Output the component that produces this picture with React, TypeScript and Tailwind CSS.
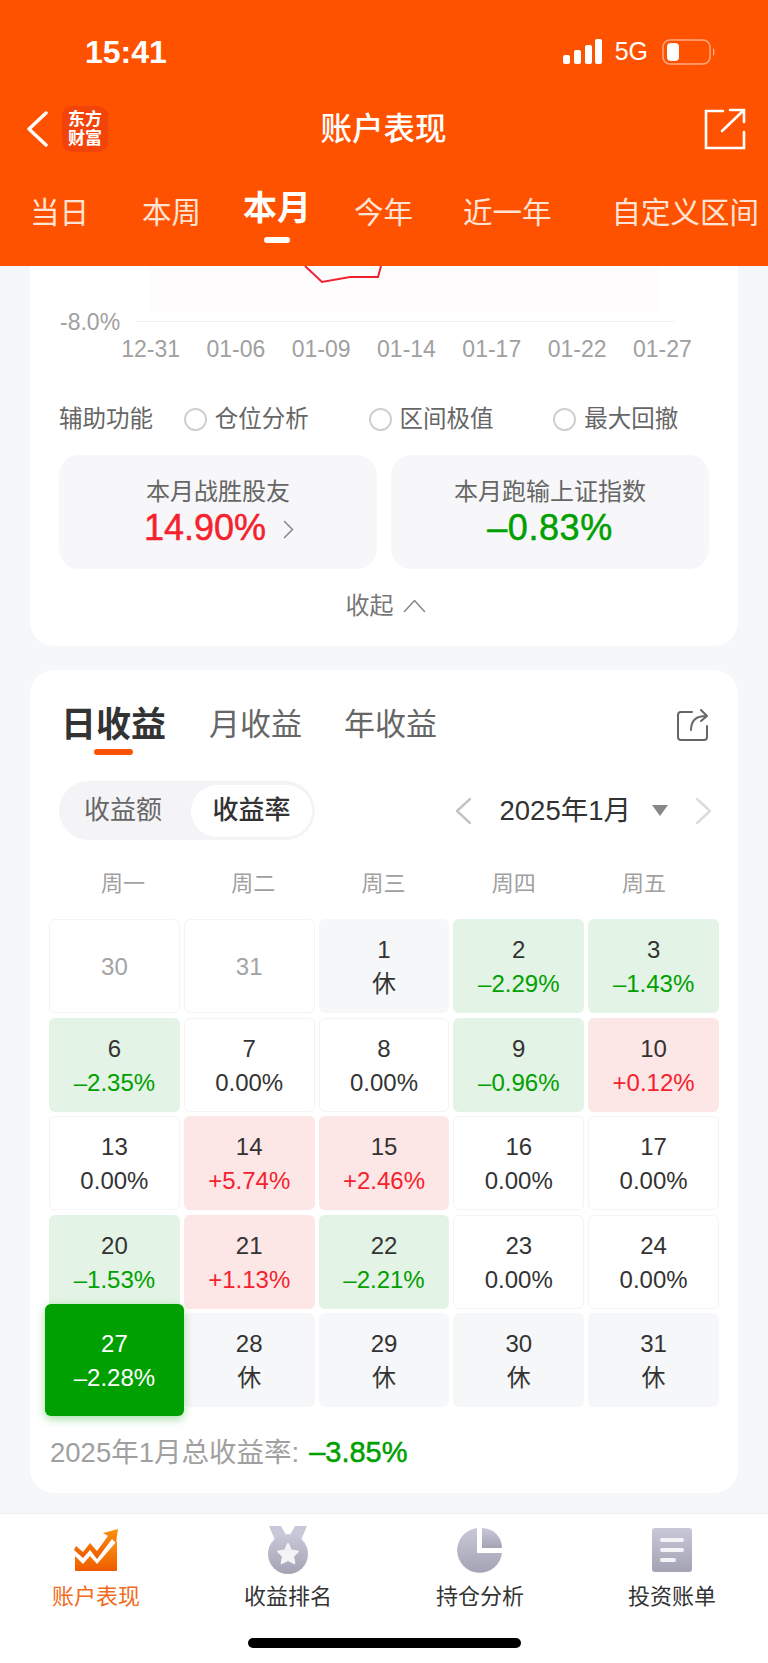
const FONT = "font-['Liberation_Sans','Noto_Sans_CJK_SC',sans-serif]";
const HEAVY = "[-webkit-text-stroke:0.5px_currentColor]";

type Cell = { day: string; value?: string; kind: "off" | "rest" | "flat" | "down" | "up" | "active" };

const cells: Cell[] = [
  { day: "30", kind: "off" },
  { day: "31", kind: "off" },
  { day: "1", value: "休", kind: "rest" },
  { day: "2", value: "–2.29%", kind: "down" },
  { day: "3", value: "–1.43%", kind: "down" },
  { day: "6", value: "–2.35%", kind: "down" },
  { day: "7", value: "0.00%", kind: "flat" },
  { day: "8", value: "0.00%", kind: "flat" },
  { day: "9", value: "–0.96%", kind: "down" },
  { day: "10", value: "+0.12%", kind: "up" },
  { day: "13", value: "0.00%", kind: "flat" },
  { day: "14", value: "+5.74%", kind: "up" },
  { day: "15", value: "+2.46%", kind: "up" },
  { day: "16", value: "0.00%", kind: "flat" },
  { day: "17", value: "0.00%", kind: "flat" },
  { day: "20", value: "–1.53%", kind: "down" },
  { day: "21", value: "+1.13%", kind: "up" },
  { day: "22", value: "–2.21%", kind: "down" },
  { day: "23", value: "0.00%", kind: "flat" },
  { day: "24", value: "0.00%", kind: "flat" },
  { day: "27", value: "–2.28%", kind: "active" },
  { day: "28", value: "休", kind: "rest" },
  { day: "29", value: "休", kind: "rest" },
  { day: "30", value: "休", kind: "rest" },
  { day: "31", value: "休", kind: "rest" },
];

const cellBox = {
  off: "border border-[#f4f4f6] bg-white",
  rest: "bg-[#f6f7f9]",
  flat: "border border-[#f4f4f6] bg-white",
  down: "bg-[#e3f3e5]",
  up: "bg-[#fde6e6]",
  active: "relative z-10 -mx-1 -mt-[9px] -mb-[9px] bg-[#00a000] shadow-[0_3px_10px_rgba(0,160,0,0.35)]",
};

const cellValue = {
  off: "",
  rest: "text-[#333333]",
  flat: "text-[#333333]",
  down: "text-[#00a000]",
  up: "text-[#f5222d]",
  active: "text-white",
};

function DayCell({ cell }: { cell: Cell }) {
  if (cell.kind === "off") {
    return (
      <div className={`flex items-center justify-center rounded-md pt-[2px] text-[24px] text-[#a3a3a3] ${cellBox.off}`}>
        {cell.day}
      </div>
    );
  }
  return (
    <div className={`flex flex-col items-center justify-center gap-[8px] rounded-md pt-[2px] ${cellBox[cell.kind]}`}>
      <span className={`text-[24px] leading-[26px] ${cell.kind === "active" ? "text-white" : "text-[#333333]"}`}>
        {cell.day}
      </span>
      <span className={`text-[24px] leading-[26px] ${cellValue[cell.kind]}`}>{cell.value}</span>
    </div>
  );
}

function Radio({ label }: { label: string }) {
  return (
    <div className="flex w-[185px] items-center gap-[8px]">
      <span className="size-[23px] rounded-full border-2 border-[#d0d0d0]" />
      <span>{label}</span>
    </div>
  );
}

function MonthArrow({ dir, color }: { dir: "left" | "right"; color: string }) {
  return (
    <svg width="17" height="28" viewBox="0 0 17 28" fill="none" stroke={color} strokeWidth="2.4" strokeLinecap="round" strokeLinejoin="round">
      <path d={dir === "left" ? "M15 2 L2 14 L15 26" : "M2 2 L15 14 L2 26"} />
    </svg>
  );
}

function ChartIcon() {
  return (
    <svg width="46" height="46" viewBox="0 0 46 46">
      <defs>
        <linearGradient id="chartFill" x1="0" y1="0" x2="0" y2="1">
          <stop offset="0" stopColor="#f99210" />
          <stop offset="1" stopColor="#ef5a00" />
        </linearGradient>
      </defs>
      <path d="M2 29 L10 37 L17 29 L24 37 L44 14 V43 Q44 44 43 44 H3 Q2 44 2 43 Z" fill="url(#chartFill)" />
      <path d="M3 19 L10 25 L17 16 L24 24 L35 9 L30 6 L45 2 L43 16 L39 12 L24 32 L17 23 L10 31 L1 23 Z" fill="url(#chartFill)" />
    </svg>
  );
}

function MedalIcon() {
  return (
    <svg width="40" height="50" viewBox="0 0 40 50">
      <defs>
        <linearGradient id="medalFill" x1="0" y1="0" x2="0" y2="1">
          <stop offset="0" stopColor="#c9c8d8" />
          <stop offset="1" stopColor="#a4a3b3" />
        </linearGradient>
      </defs>
      <path d="M1 1 H13 L18 10 C14 11 10 13 7 15 Z M27 1 H39 L33 15 C30 13 26 11 22 10 Z" fill="#c9c8d8" />
      <circle cx="20" cy="29" r="20" fill="url(#medalFill)" />
      <path d="M20 19 L23 25.5 L30 26.4 L25 31.2 L26.3 38.2 L20 34.8 L13.7 38.2 L15 31.2 L10 26.4 L17 25.5 Z" fill="#f4f4f7" stroke="#f4f4f7" strokeWidth="2" strokeLinejoin="round" />
    </svg>
  );
}

function PieIcon() {
  return (
    <svg width="46" height="46" viewBox="0 0 46 46">
      <defs>
        <linearGradient id="pieFill" x1="0" y1="0" x2="0" y2="1">
          <stop offset="0" stopColor="#c9c8d8" />
          <stop offset="1" stopColor="#a4a3b3" />
        </linearGradient>
      </defs>
      <path d="M20 1 V26 H45 A22.5 22.5 0 1 1 20 1 Z" fill="url(#pieFill)" />
      <path d="M25 1 A20 20 0 0 1 45 21 H25 Z" fill="url(#pieFill)" />
    </svg>
  );
}

function BillIcon() {
  return (
    <svg width="42" height="46" viewBox="0 0 42 46">
      <defs>
        <linearGradient id="billFill" x1="0" y1="0" x2="0" y2="1">
          <stop offset="0" stopColor="#c9c8d8" />
          <stop offset="1" stopColor="#a4a3b3" />
        </linearGradient>
      </defs>
      <rect x="1" y="1" width="40" height="44" rx="3" fill="url(#billFill)" />
      <rect x="9" y="11" width="24" height="4" rx="2" fill="#f4f4f7" />
      <rect x="9" y="21" width="24" height="4" rx="2" fill="#f4f4f7" />
      <rect x="9" y="31" width="16" height="4" rx="2" fill="#f4f4f7" />
    </svg>
  );
}

export default function App() {
  return (
    <div className={`flex h-[1663px] w-[768px] flex-col overflow-hidden bg-[#f6f7f9] ${FONT}`}>
      <header className="flex h-[266px] shrink-0 flex-col bg-[#ff5200] text-white">
        <div className="flex h-[102px] items-center justify-between pl-[85px] pr-[52px] pt-[2px]">
          <span className="text-[32px] font-semibold">15:41</span>
          <div className="flex items-center">
            <svg width="40" height="26" viewBox="0 0 40 26" fill="white">
              <rect x="0" y="16" width="7" height="9" rx="2" />
              <rect x="11" y="11" width="7" height="14" rx="2" />
              <rect x="22" y="6" width="7" height="19" rx="2" />
              <rect x="32" y="0" width="7" height="25" rx="2" />
            </svg>
            <span className="ml-[12px] text-[25px]">5G</span>
            <svg className="ml-[14px]" width="54" height="26" viewBox="0 0 54 26" fill="none">
              <rect x="1" y="1" width="47" height="24" rx="7" stroke="white" strokeOpacity="0.5" strokeWidth="1.5" />
              <rect x="5" y="4" width="12" height="18" rx="4" fill="white" />
              <path d="M51 9 C53 10 53 16 51 17 Z" fill="white" fillOpacity="0.5" />
            </svg>
          </div>
        </div>
        <div className="grid h-[54px] grid-cols-3 items-center pl-[25px] pr-[22px]">
          <div className="flex items-center gap-[13px]">
            <svg width="24" height="36" viewBox="0 0 24 36" fill="none">
              <path d="M21 2 L4 18 L21 34" stroke="white" strokeWidth="3.4" strokeLinecap="round" strokeLinejoin="round" />
            </svg>
            <div className="flex size-[46px] flex-col items-center justify-center rounded-[10px] bg-[#f2440a] text-[17px] font-bold leading-[19px]">
              <span>东方</span>
              <span>财富</span>
            </div>
          </div>
          <span className="whitespace-nowrap pr-[4px] pt-[2px] text-center text-[31.5px] font-medium">账户表现</span>
          <svg className="justify-self-end" width="42" height="42" viewBox="0 0 42 42" fill="none" stroke="white" strokeWidth="2.6" strokeLinecap="round">
            <path d="M19 3 H2 V40 H40 V24" />
            <path d="M18 23 L40 2 M26 2 H40 V14" />
          </svg>
        </div>
        <nav className="mt-[33px] flex items-start whitespace-nowrap text-[29.5px] leading-[40px] text-[#ffe4d6]">
          <span className="ml-[30px] mt-[4px]">当日</span>
          <span className="ml-[53px] mt-[4px]">本周</span>
          <div className="ml-[42px] flex flex-col items-center">
            <span className="text-[34px] font-bold leading-[39px] text-white">本月</span>
            <span className="mt-[9px] h-[6px] w-[26px] rounded-full bg-white" />
          </div>
          <span className="ml-[43px] mt-[4px]">今年</span>
          <span className="ml-[50px] mt-[4px]">近一年</span>
          <span className="ml-[60px] mt-[4px]">自定义区间</span>
        </nav>
      </header>

      <section className="mx-[30px] h-[380px] shrink-0 rounded-b-[24px] bg-white">
        <div className="relative h-[56px]">
          <svg className="absolute left-[120px] top-0" width="510" height="56" viewBox="0 0 510 56">
            <rect x="0" y="0" width="510" height="46" fill="#fffcfd" />
            <path d="M155 0 L172 16 L200 11 L228 11 L231 0" fill="none" stroke="#f0222e" strokeWidth="2" />
          </svg>
          <div className="absolute bottom-0 left-[105px] right-[63px] h-px bg-[#eeeff1]" />
          <span className="absolute bottom-[-13px] left-[30px] text-[23px] leading-[26px] text-[#a0a0a0]">-8.0%</span>
        </div>
        <div className="ml-[78px] mr-[33px] mt-[14px] grid grid-cols-7 text-center text-[23px] leading-[26px] text-[#a0a0a0]">
          {["12-31", "01-06", "01-09", "01-14", "01-17", "01-22", "01-27"].map((d) => (
            <span key={d}>{d}</span>
          ))}
        </div>
        <div className="ml-[29px] mt-[41px] flex items-center text-[23.5px] leading-[32px] text-[#666666]">
          <span className="w-[125px]">辅助功能</span>
          <Radio label="仓位分析" />
          <Radio label="区间极值" />
          <Radio label="最大回撤" />
        </div>
        <div className="mx-[29px] mt-[20px] grid grid-cols-2 gap-[14px]">
          <div className="flex h-[114px] flex-col items-center justify-center rounded-[20px] bg-[#f7f7f9]">
            <span className="text-[24px] leading-[32px] text-[#666666]">本月战胜股友</span>
            <div className="flex items-center gap-[17px] pl-[2px]">
              <span className={`text-[36px] leading-[40px] text-[#f5222d] ${HEAVY}`}>14.90%</span>
              <svg className="mt-[3px]" width="11" height="19" viewBox="0 0 11 19" fill="none" stroke="#888888" strokeWidth="1.6" strokeLinecap="round" strokeLinejoin="round">
                <path d="M1.5 1.5 L9.5 9.5 L1.5 17.5" />
              </svg>
            </div>
          </div>
          <div className="flex h-[114px] flex-col items-center justify-center rounded-[20px] bg-[#f7f7f9]">
            <span className="text-[24px] leading-[32px] text-[#666666]">本月跑输上证指数</span>
            <span className={`text-[36px] leading-[40px] tracking-[0.6px] text-[#00a000] ${HEAVY}`}>–0.83%</span>
          </div>
        </div>
        <div className="mt-[21px] flex items-center justify-center gap-[9px] pl-[3px] text-[24px] leading-[32px] text-[#777777]">
          <span>收起</span>
          <svg width="23" height="14" viewBox="0 0 23 14" fill="none" stroke="#888888" strokeWidth="1.5" strokeLinecap="round" strokeLinejoin="round">
            <path d="M1.5 12.5 L11.5 1.5 L21.5 12.5" />
          </svg>
        </div>
      </section>

      <section className="mx-[30px] mt-[24px] h-[823px] shrink-0 rounded-[24px] bg-white">
        <div className="flex items-start justify-between pl-[31px] pr-[29px] pt-[33px]">
          <div className="flex items-start">
            <div className="flex w-[105px] flex-col">
              <span className="whitespace-nowrap text-[35px] font-bold leading-[44px] text-[#333333]">日收益</span>
              <span className="ml-[33px] mt-[2px] h-[6px] w-[39px] rounded-full bg-[#ff5200]" />
            </div>
            <span className="ml-[43px] text-[31px] leading-[44px] text-[#666666]">月收益</span>
            <span className="ml-[42px] text-[31px] leading-[44px] text-[#666666]">年收益</span>
          </div>
          <svg className="mt-[5px]" width="32" height="33" viewBox="0 0 32 33" fill="none" stroke="#666666" strokeWidth="2" strokeLinecap="round" strokeLinejoin="round">
            <path d="M15 4 H4 Q1 4 1 7 V29 Q1 32 4 32 H27 Q30 32 30 29 V18" />
            <path d="M14 22 C14 13 19 8 29 8 M24 2 L30 8 L24 13" />
          </svg>
        </div>
        <div className="mt-[26px] flex items-center justify-between pl-[29px] pr-[26px]">
          <div className="flex h-[59px] w-[256px] items-center justify-between rounded-full bg-[#f4f4f6] pl-[25px] pr-[3px]">
            <span className="text-[26px] text-[#666666]">收益额</span>
            <span className="flex h-[52px] w-[121px] items-center justify-center rounded-full bg-white text-[26px] font-medium text-[#333333]">
              收益率
            </span>
          </div>
          <div className="flex items-center">
            <MonthArrow dir="left" color="#c4c4c4" />
            <span className="ml-[28px] text-[27.5px] text-[#333333]">2025年1月</span>
            <span className="ml-[21px] size-0 border-x-[8px] border-t-[11px] border-x-transparent border-t-[#888888]" />
            <span className="ml-[27px] flex"><MonthArrow dir="right" color="#dcdcdc" /></span>
          </div>
        </div>
        <div className="ml-[28px] mr-[29px] mt-[28px] grid grid-cols-5 text-center text-[22px] leading-[32px] text-[#a0a0a0]">
          {["周一", "周二", "周三", "周四", "周五"].map((w) => (
            <span key={w}>{w}</span>
          ))}
        </div>
        <div className="ml-[19px] mr-[19px] mt-[19px] grid grid-cols-5 grid-rows-[repeat(5,94px)] gap-x-[4px] gap-y-[4.6px]">
          {cells.map((cell, i) => (
            <DayCell key={i} cell={cell} />
          ))}
        </div>
        <div className="ml-[20px] mt-[27px] flex items-baseline">
          <span className="whitespace-nowrap text-[27.5px] leading-[36px] text-[#a0a0a0]">2025年1月总收益率:</span>
          <span className={`ml-[10px] text-[29px] leading-[36px] text-[#00a000] ${HEAVY}`}>–3.85%</span>
        </div>
      </section>

      <footer className="mt-[20px] flex-1 border-t border-[#eeeff1] bg-white">
        <div className="grid grid-cols-4 pt-[10px] text-center text-[22px] leading-[30px] text-[#333333]">
          <div className="flex flex-col items-center gap-[6px]">
            <div className="flex h-[52px] items-center"><ChartIcon /></div>
            <span className="text-[#f26a1b]">账户表现</span>
          </div>
          <div className="flex flex-col items-center gap-[6px]">
            <div className="flex h-[52px] items-center"><MedalIcon /></div>
            <span>收益排名</span>
          </div>
          <div className="flex flex-col items-center gap-[6px]">
            <div className="flex h-[52px] items-center"><PieIcon /></div>
            <span>持仓分析</span>
          </div>
          <div className="flex flex-col items-center gap-[6px]">
            <div className="flex h-[52px] items-center"><BillIcon /></div>
            <span>投资账单</span>
          </div>
        </div>
        <div className="mx-auto mt-[26px] h-[10px] w-[273px] rounded-full bg-black" />
      </footer>
    </div>
  );
}
